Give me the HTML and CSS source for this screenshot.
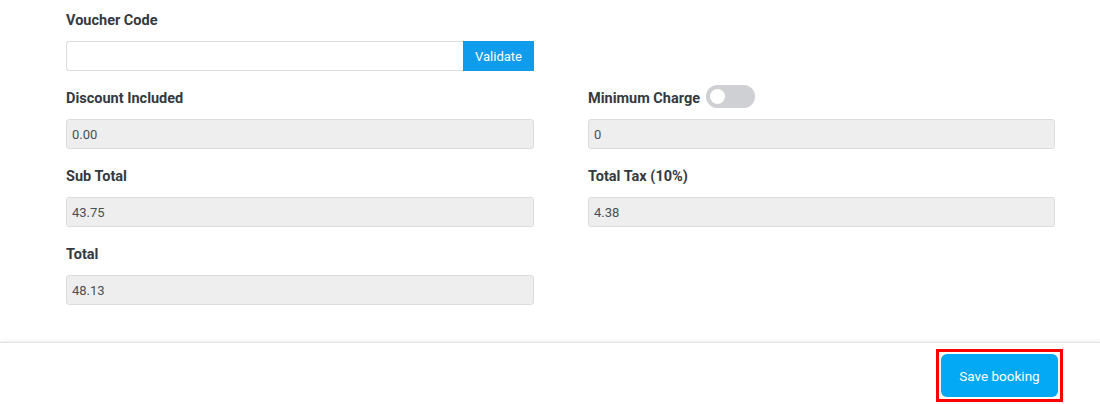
FILE: index.html
```html
<!DOCTYPE html>
<html lang="en">
  <head>
    <meta charset="UTF-8" />
    <meta name="viewport" content="width=device-width, initial-scale=1.0" />
    <title>Booking</title>
    <link rel="stylesheet" href="styles.css">
  </head>

  <body>
    <div class="booking-form">
      <div class="form-grid">
        <div class="field">
          <label class="field-label">Voucher Code</label>
          <div class="voucher-group">
            <input class="voucher-input" type="text" />
            <button class="validate-btn">Validate</button>
          </div>
        </div>
        <div class="field"></div>

        <div class="field">
          <label class="field-label">Discount Included</label>
          <div class="field-input">0.00</div>
        </div>
        <div class="field">
          <label class="field-label">
            Minimum Charge
            <span class="toggle"><span class="toggle-knob"></span></span>
          </label>
          <div class="field-input">0</div>
        </div>

        <div class="field">
          <label class="field-label">Sub Total</label>
          <div class="field-input">43.75</div>
        </div>
        <div class="field">
          <label class="field-label">Total Tax (10%)</label>
          <div class="field-input">4.38</div>
        </div>

        <div class="field">
          <label class="field-label">Total</label>
          <div class="field-input">48.13</div>
        </div>
      </div>
    </div>

    <div class="footer">
      <div class="highlight">
        <button class="save-btn">Save booking</button>
      </div>
    </div>
  </body>
</html>
```

FILE: styles.css
```css
body {
  margin: 0;
  background-color: #fff;
  font-family: Roboto, "Liberation Sans", Arial, sans-serif;
}

.booking-form {
  padding: 10px 45px 20px 66px;
}

.form-grid {
  display: grid;
  grid-template-columns: 468px 467px;
  column-gap: 54px;
}

.field {
  display: flex;
  flex-direction: column;
  margin-bottom: 17px;
}

.field-label {
  display: flex;
  align-items: center;
  height: 20px;
  margin-bottom: 11px;
  font-size: 14.5px;
  font-weight: 700;
  color: #343a40;
}

.field-input {
  box-sizing: border-box;
  height: 30px;
  padding: 0 5px;
  display: flex;
  align-items: center;
  background-color: #eeeeee;
  border: 1px solid #dcdcdc;
  border-radius: 3px;
  font-size: 13px;
  color: #495057;
}

.voucher-group {
  display: flex;
  height: 30px;
}

.voucher-input {
  box-sizing: border-box;
  flex: 1;
  height: 30px;
  margin: 0;
  border: 1px solid #dcdce0;
  border-right: none;
  border-radius: 3px 0 0 3px;
  outline: none;
}

.validate-btn {
  width: 71px;
  height: 30px;
  border: none;
  background-color: #109cec;
  color: #fff;
  font-family: Roboto, "Liberation Sans", Arial, sans-serif;
  font-size: 13px;
}

.toggle {
  display: inline-block;
  position: relative;
  width: 49px;
  height: 23px;
  margin-left: 6px;
  margin-top: -3px;
  border-radius: 12px;
  background-color: #ced0d4;
}

.toggle-knob {
  position: absolute;
  left: 4px;
  top: 4px;
  width: 15px;
  height: 15px;
  border-radius: 50%;
  background-color: #fff;
}

.footer {
  display: flex;
  justify-content: flex-end;
  border-top: 1px solid #e2e2e2;
  box-shadow: 0 -1px 3px rgba(0, 0, 0, 0.08);
  padding: 6px 37px 3px 0;
}

.highlight {
  border: 3px solid #f00;
  padding: 2px;
}

.save-btn {
  width: 117px;
  height: 43px;
  border: none;
  border-radius: 6px;
  background-color: #03a9f4;
  color: #fff;
  font-family: Roboto, "Liberation Sans", Arial, sans-serif;
  font-size: 13.5px;
}
```
